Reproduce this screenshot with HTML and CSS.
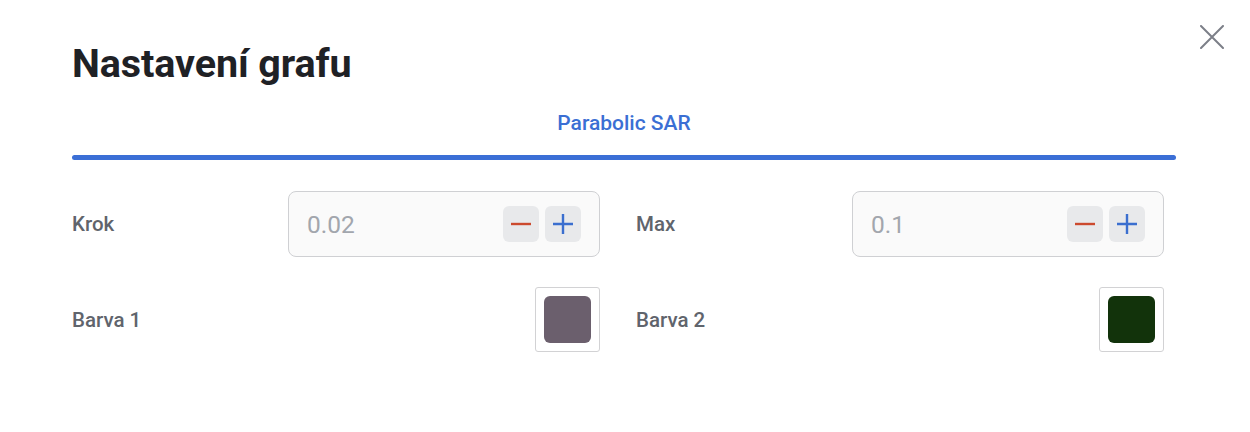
FILE: index.html
```html
<!DOCTYPE html>
<html lang="cs">
<head>
<meta charset="utf-8">
<title>Nastavení grafu</title>
<link rel="stylesheet" href="styles.css">
</head>
<body>
<div class="dialog">
  <button class="close" aria-label="Zavřít">
    <svg width="24" height="24" viewBox="0 0 24 24"><path d="M1 1L23 23M23 1L1 23" stroke="#7c7f88" stroke-width="2" stroke-linecap="round" fill="none"/></svg>
  </button>
  <h1 class="title">Nastavení grafu</h1>
  <div class="tabs">
    <div class="tab">Parabolic SAR</div>
    <div class="tab-line"></div>
  </div>
  <div class="grid">
    <div class="field">
      <span class="label">Krok</span>
      <div class="num">
        <span class="value">0.02</span>
        <div class="btns">
          <button class="step"><svg width="20" height="20" viewBox="0 0 20 20"><path d="M0 10H20" stroke="#cc4a2e" stroke-width="2.4"/></svg></button>
          <button class="step"><svg width="20" height="20" viewBox="0 0 20 20"><path d="M0 10H20M10 0V20" stroke="#3b6fcf" stroke-width="2.4"/></svg></button>
        </div>
      </div>
    </div>
    <div class="field">
      <span class="label">Max</span>
      <div class="num">
        <span class="value">0.1</span>
        <div class="btns">
          <button class="step"><svg width="20" height="20" viewBox="0 0 20 20"><path d="M0 10H20" stroke="#cc4a2e" stroke-width="2.4"/></svg></button>
          <button class="step"><svg width="20" height="20" viewBox="0 0 20 20"><path d="M0 10H20M10 0V20" stroke="#3b6fcf" stroke-width="2.4"/></svg></button>
        </div>
      </div>
    </div>
    <div class="field">
      <span class="label">Barva 1</span>
      <div class="swatch"><div class="chip" style="background:#6b5f6d"></div></div>
    </div>
    <div class="field">
      <span class="label">Barva 2</span>
      <div class="swatch"><div class="chip" style="background:#12330b"></div></div>
    </div>
  </div>
</div>
</body>
</html>
```

FILE: styles.css
```css
* { box-sizing: border-box; }
html, body { margin: 0; padding: 0; background: #fff; }
body { font-family: Roboto, "Noto Sans", Arial, sans-serif; width: 1250px; height: 432px; overflow: hidden; }
.dialog { position: relative; padding: 38px 74px 0 72px; }
.close { position: absolute; top: 25px; right: 26px; width: 24px; height: 24px; padding: 0; border: 0; background: none; display: flex; }
.title { margin: 0; font-size: 39.5px; font-weight: 700; color: #1f2125; line-height: 52px; letter-spacing: -0.1px; }
.tabs { margin-top: 20px; display: flex; flex-direction: column; align-items: center; }
.tab { font-size: 21px; font-weight: 500; color: #3b6fd4; line-height: 26px; height: 26px; }
.tab-line { align-self: stretch; height: 5px; border-radius: 3px; background: #3b6fd6; margin-top: 19px; }
.grid { display: grid; grid-template-columns: 528px 528px; column-gap: 36px; row-gap: 30px; margin-top: 31px; }
.field { display: flex; align-items: center; justify-content: space-between; }
.label { font-size: 20.5px; font-weight: 500; color: #60646c; }
.num { width: 312px; height: 66px; border: 1px solid #cfd0d3; border-radius: 8px; background: #fafafa; display: flex; align-items: center; justify-content: space-between; padding: 0 18px 0 18px; }
.value { font-size: 24.5px; color: #a2a6ad; }
.btns { display: flex; gap: 6px; }
.step { width: 36px; height: 36px; border: 0; border-radius: 6px; background: #e8e9eb; padding: 0; display: flex; align-items: center; justify-content: center; }
.swatch { width: 65px; height: 65px; border: 1px solid #d2d2d4; border-radius: 3px; padding: 8px; }
.chip { width: 100%; height: 100%; border-radius: 6px; }
```
